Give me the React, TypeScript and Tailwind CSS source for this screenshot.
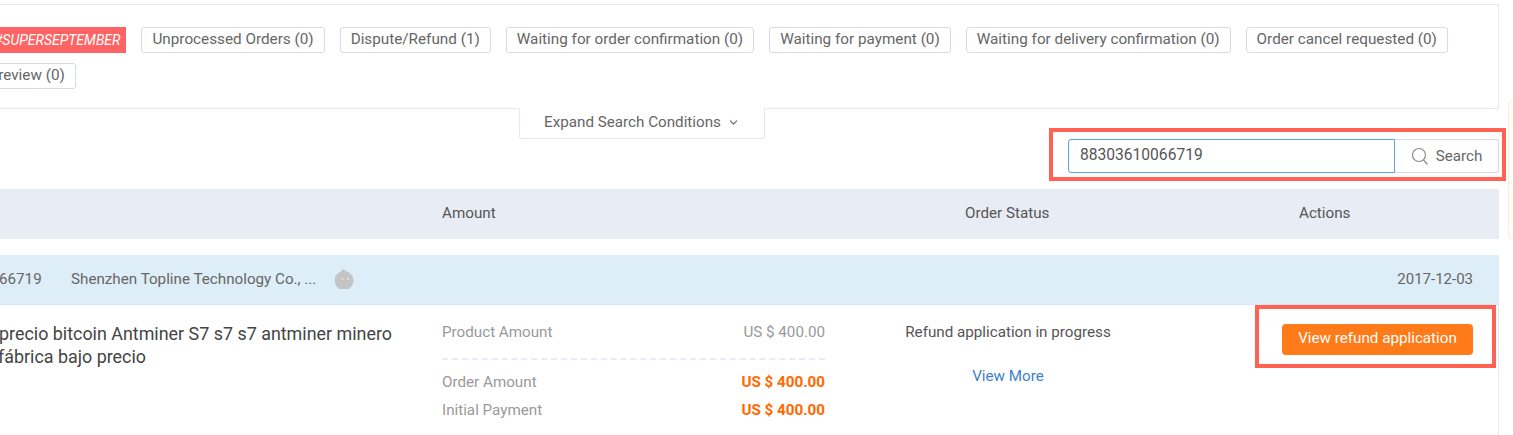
import { ChevronDown } from 'lucide-react';

const tags = [
  'Unprocessed Orders (0)',
  'Dispute/Refund (1)',
  'Waiting for order confirmation (0)',
  'Waiting for payment (0)',
  'Waiting for delivery confirmation (0)',
  'Order cancel requested (0)',
];

function Tag({ label }: { label: string }) {
  return (
    <span className="flex h-[26px] items-center rounded-[3px] border border-[#d5dce8] bg-white px-[10px] pb-[2px] text-[15.27px] whitespace-nowrap text-[#666]">
      {label}
    </span>
  );
}

function AmountRow({ label, value, strong }: { label: string; value: string; strong?: boolean }) {
  return (
    <div className="flex h-[28px] items-center justify-between">
      <span className="text-[#999]">{label}</span>
      <span className={strong ? 'font-bold text-[#ff6a00]' : 'text-[#999]'}>{value}</span>
    </div>
  );
}

export default function App() {
  return (
    <div className="relative h-[435px] w-[1513px] overflow-hidden bg-white pt-1 font-['Roboto',sans-serif] text-[15.2px] text-[#666]">
      {/* filters panel */}
      <div className="h-[105px] w-[1499px] border-t border-r border-b border-[#e3e9f3] pt-[22px]">
        <div className="flex gap-[15px]">
          <span className="-ml-[6px] flex h-[26px] items-center bg-[#ff6464] pr-[6px] text-[14px] text-white italic">#SUPERSEPTEMBER</span>
          {tags.map((t) => (
            <Tag key={t} label={t} />
          ))}
        </div>
        <div className="mt-[10px] flex">
          <div className="-ml-[72px]">
            <Tag label="Pending review (0)" />
          </div>
        </div>
      </div>

      {/* expand tab */}
      <div className="-mt-px ml-[519px] flex h-[31px] w-[246px] items-center justify-center gap-[6px] rounded-b-[3px] border border-t-white border-[#e3e9f3] bg-white pb-[2px]">
        Expand Search Conditions
        <ChevronDown size={13} strokeWidth={2} className="text-[#666]" />
      </div>

      {/* search */}
      <div className="flex h-[34px] w-[1499px] justify-end">
        <div className="flex h-[34px] w-[327px] items-center rounded-l-[3px] border border-[#5aa5d8] bg-white pl-[11px] text-[15.6px] text-[#555]">
          88303610066719
        </div>
        <div className="flex h-[34px] w-[104px] items-center justify-center gap-[6px] rounded-r-[3px] border border-l-0 border-[#d8d8d8] bg-white text-[#666]">
          <svg width="19" height="19" viewBox="0 0 19 19" fill="none" stroke="#8a8a8a" strokeWidth="1.2">
            <circle cx="8" cy="8" r="6.5" />
            <path d="M12.5 13l4 4.5" />
          </svg>
          Search
        </div>
      </div>

      {/* table head */}
      <div className="mt-[16px] grid h-[50px] w-[1499px] grid-cols-[442px_425px_432px_200px] items-center bg-[#e8ecf4] pb-[2px] text-[#555]">
        <span />
        <span>Amount</span>
        <span className="pl-[98px]">Order Status</span>
        <span>Actions</span>
      </div>

      {/* order */}
      <div className="mt-[16px] h-[181px] w-[1499px] border-r border-[#e3e9f3]">
        <div className="flex h-[50px] items-center border-b border-[#d8e6f0] bg-[#deeef8] pr-[26px] text-[#666]">
          <span className="-ml-[1px] w-[72px]">66719</span>
          <span className="whitespace-nowrap">Shenzhen Topline Technology Co., ...</span>
          <svg className="ml-[19px] -mt-[3px]" width="20" height="22" viewBox="0 0 20 22">
            <path d="M8 2l3 2.2A9.5 9.5 0 1 1 6 4.5z" fill="#c4c4c4" />
            <circle cx="7.5" cy="12" r="0.9" fill="#e8e8e8" />
            <circle cx="13" cy="12" r="0.9" fill="#e8e8e8" />
          </svg>
          <span className="ml-auto -mr-[1px] text-[15px]">2017-12-03</span>
        </div>
        <div className="grid grid-cols-[442px_383px_432px_1fr]">
          <div className="-ml-[1px] pt-[17px] text-[17.9px] leading-[23px] whitespace-nowrap text-[#444]">
            precio bitcoin Antminer S7 s7 s7 antminer minero
            <br />
            <span className="-ml-[1px]">fábrica bajo precio</span>
          </div>
          <div className="pt-[13px]">
            <AmountRow label="Product Amount" value="US $ 400.00" />
            <div className="mt-[12px] mb-[8px] border-t-2 border-dashed border-[#e8edf5]" />
            <AmountRow label="Order Amount" value="US $ 400.00" strong />
            <AmountRow label="Initial Payment" value="US $ 400.00" strong />
          </div>
          <div className="flex w-[366px] flex-col items-center pt-[16px]">
            <span className="whitespace-nowrap text-[#555]">Refund application in progress</span>
            <span className="mt-[21px] text-[#3f80cc]">View More</span>
          </div>
          <div className="ml-[25px] pt-[19px]">
            <div className="flex h-[31px] w-[191px] items-center justify-center rounded-[4px] bg-[#ff7a18] pb-[2px] whitespace-nowrap text-white">
              View refund application
            </div>
          </div>
        </div>
      </div>

      {/* side tip, cut off by the window */}
      <div className="absolute top-[100px] left-[1508px] h-[140px] w-[30px] rounded-[4px] border border-[#fdf0d8] bg-[#fffdf8]" />

      {/* annotation boxes */}
      <div className="absolute top-[128px] left-[1049px] h-[53px] w-[457px] border-[4px] border-[#ff6252]" />
      <div className="absolute top-[305px] left-[1255px] h-[63px] w-[241px] border-[4px] border-[#ff6252]" />
    </div>
  );
}
